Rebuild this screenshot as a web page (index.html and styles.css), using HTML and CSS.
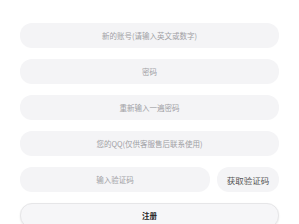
FILE: index.html
```html
<!DOCTYPE html>
<html lang="zh">
<head>
    <meta charset="UTF-8">
    <meta name="viewport" content="width=device-width, initial-scale=1.0">
    <title>注册</title>
    <link rel="stylesheet" href="styles.css">
</head>
<body>
    <div class="form">
        <input type="text" class="field" placeholder="新的账号(请输入英文或数字)">
        <input type="password" class="field" placeholder="密码">
        <input type="password" class="field" placeholder="重新输入一遍密码">
        <input type="text" class="field" placeholder="您的QQ(仅供客服售后联系使用)">
        <div class="code-row">
            <input type="text" class="field code-input" placeholder="输入验证码">
            <button class="code-button">获取验证码</button>
        </div>
        <button class="submit-button">注册</button>
    </div>
</body>
</html>
```

FILE: styles.css
```css
body {
    margin: 0;
    background: #ffffff;
    font-family: "Noto Sans CJK SC", "Noto Sans", sans-serif;
}

.form {
    display: flex;
    flex-direction: column;
    gap: 11px;
    padding: 23px 20px 0 20px;
}

.field {
    box-sizing: border-box;
    width: 100%;
    height: 25px;
    border: none;
    border-radius: 12px;
    background: #f4f4f6;
    text-align: center;
    font-family: inherit;
    font-size: 7.5px;
    color: #333;
    outline: none;
    padding: 0 10px;
}

.field::placeholder {
    color: #a0a0a4;
}

.code-row {
    display: flex;
    gap: 7px;
}

.code-input {
    flex: 1;
}

.code-button {
    width: 62px;
    height: 25px;
    border: none;
    border-radius: 12px;
    background: #f4f4f6;
    color: #555;
    font-family: inherit;
    font-size: 8.5px;
    padding: 0;
}

.submit-button {
    box-sizing: border-box;
    width: 100%;
    height: 25px;
    border: 1px solid #e6e6e8;
    border-radius: 12px;
    background: #f6f6f8;
    box-shadow: 0 1px 2px rgba(0, 0, 0, 0.08);
    color: #222;
    font-family: inherit;
    font-size: 7.5px;
    font-weight: bold;
}
```
